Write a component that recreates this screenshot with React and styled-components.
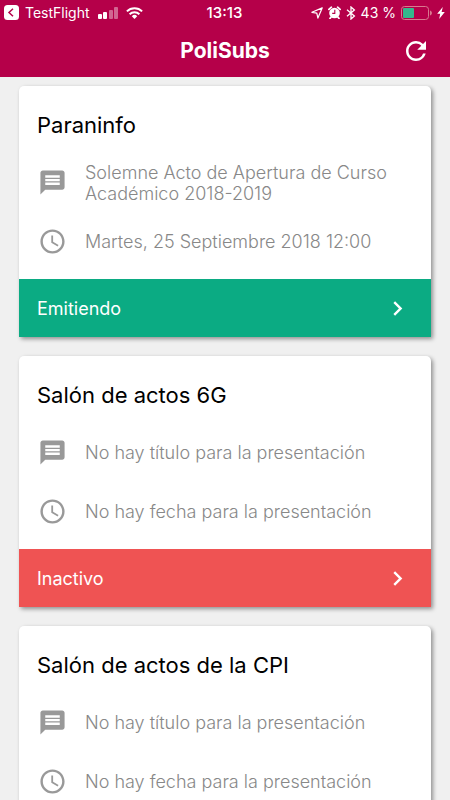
import React from 'react'
import styled, { createGlobalStyle } from 'styled-components'
import { MdAccessTime, MdChevronRight, MdMessage, MdRefresh } from 'react-icons/md'

const rooms = [
    {
        name: 'Paraninfo',
        title: 'Solemne Acto de Apertura de Curso Académico 2018-2019',
        date: 'Martes, 25 Septiembre 2018 12:00',
        status: 'Emitiendo',
        live: true,
    },
    {
        name: 'Salón de actos 6G',
        status: 'Inactivo',
    },
    {
        name: 'Salón de actos de la CPI',
    },
]

function StatusBar() {
    return (
        <Status>
            <StatusLeft>
                <BackLink href="#testflight">
                    <svg width="15" height="15" viewBox="0 0 15 15">
                        <rect width="15" height="15" rx="3.5" fill="#fff" />
                        <path d="M9 3.7 5 7.5l4 3.8" fill="none" stroke="#b50049" strokeWidth="1.5" />
                    </svg>
                    TestFlight
                </BackLink>
                <svg width="20" height="12" viewBox="0 0 20 12" fill="#fff">
                    <rect y="7" width="4" height="5" rx="1" />
                    <rect x="5" y="5" width="4" height="7" rx="1" />
                    <rect x="11" y="3" width="4" height="9" rx="1" opacity=".4" />
                    <rect x="16" y="0" width="4" height="12" rx="1" opacity=".4" />
                </svg>
                <svg width="17" height="12" viewBox="0 0 17 12" fill="none" stroke="#fff" strokeWidth="2">
                    <path d="M.9 4.4a10.8 10.8 0 0 1 15.2 0" />
                    <path d="M3.6 7.2a7 7 0 0 1 9.8 0" />
                    <path d="M8.5 12 5.8 9.2a3.8 3.8 0 0 1 5.4 0z" fill="#fff" stroke="none" />
                </svg>
            </StatusLeft>
            <Clock>13:13</Clock>
            <StatusRight>
                <svg width="12" height="12" viewBox="0 0 12 12" fill="none" stroke="#fff" strokeWidth="1.2">
                    <path d="M11.2.9.9 5.3l4.9.9 1.1 4.9z" strokeLinejoin="round" />
                </svg>
                <svg width="13" height="13" viewBox="0 0 13 13">
                    <circle cx="6.5" cy="7" r="5.3" fill="#fff" />
                    <path d="m.9 3.4 2.5-2.2M12.1 3.4 9.6 1.2M3.2 11 2 12.4M9.8 11l1.2 1.4" fill="none" stroke="#fff" strokeWidth="1.7" strokeLinecap="round" />
                    <path d="M6.8 3.8v3.6H4.2" fill="none" stroke="#b50049" strokeWidth="1.1" />
                </svg>
                <svg width="10" height="14" viewBox="0 0 10 14" fill="none" stroke="#fff" strokeWidth="1.3">
                    <path d="m1 3.8 7.4 6.2L5 13V1l3.4 3L1 10.2" />
                </svg>
                <span>43 %</span>
                <svg width="31" height="14" viewBox="0 0 31 14">
                    <rect x=".5" y=".5" width="27" height="13" rx="3" fill="none" stroke="#d9798f" />
                    <rect x="2" y="2" width="11" height="10" rx="1" fill="#35b88c" />
                    <path d="M29 4.5c2.6.8 2.6 4.2 0 5z" fill="#d9798f" />
                </svg>
                <svg width="8" height="12" viewBox="0 0 8 12" fill="#fff">
                    <path d="M5.8 0 .2 6.8h3L2.2 12l5.6-7H4.6z" />
                </svg>
            </StatusRight>
        </Status>
    )
}

function RoomCard({ room }) {
    return (
        <Card>
            <CardBody>
                <RoomName>{room.name}</RoomName>
                <Info>
                    <MdMessage size={29} />
                    <InfoText>{room.title || 'No hay título para la presentación'}</InfoText>
                </Info>
                <Info>
                    <MdAccessTime size={29} />
                    <InfoText>{room.date || 'No hay fecha para la presentación'}</InfoText>
                </Info>
            </CardBody>
            {room.status &&
            (<StatusButton $live={room.live}>
                <span>{room.status}</span>
                <MdChevronRight size={29} />
            </StatusButton>)
            }
        </Card>
    )
}

function App() {
    return (
        <Screen>
            <GlobalStyle />
            <Header>
                <StatusBar />
                <NavBar>
                    <Title>PoliSubs</Title>
                    <RefreshButton aria-label="Actualizar">
                        <MdRefresh size={30} />
                    </RefreshButton>
                </NavBar>
            </Header>
            <RoomList>
                {rooms.map((room) => (
                    <RoomCard key={room.name} room={room} />
                ))}
            </RoomList>
        </Screen>
    )
}

export default App

const GlobalStyle = createGlobalStyle`
* {
    box-sizing: border-box;
}
body {
    margin: 0;
    background: #f0f0f0;
    font-family: Inter, Roboto, sans-serif;
}
svg {
    display: block;
    flex-shrink: 0;
}
button {
    border: none;
    padding: 0;
    font-family: inherit;
    cursor: pointer;
}
`
const Screen = styled.div`
display: flex;
flex-direction: column;
height: 100vh;
overflow: hidden;
`
const Header = styled.header`
flex-shrink: 0;
background: #b50049;
color: white;
`
const Status = styled.div`
display: grid;
grid-template-columns: 1fr auto 1fr;
align-items: center;
height: 25px;
padding: 0 5px 0 4px;
font-size: 14px;
`
const StatusLeft = styled.div`
display: flex;
align-items: center;
gap: 8px;
`
const BackLink = styled.a`
display: flex;
align-items: center;
gap: 6px;
color: inherit;
text-decoration: none;
`
const Clock = styled.span`
font-size: 15px;
font-weight: 500;
`
const StatusRight = styled.div`
display: flex;
align-items: center;
justify-content: flex-end;
gap: 5px;
white-space: nowrap;
`
const NavBar = styled.div`
display: grid;
grid-template-columns: 1fr auto 1fr;
align-items: center;
height: 52px;
padding: 0 19px;
`
const Title = styled.h1`
grid-column: 2;
margin: 0;
font-size: 21px;
line-height: 28px;
font-weight: 700;
`
const RefreshButton = styled.button`
justify-self: end;
background: none;
color: white;
`
const RoomList = styled.main`
flex: 1;
display: flex;
flex-direction: column;
gap: 19px;
padding: 9px 19px 19px;
overflow-y: auto;
scrollbar-width: none;
`
const Card = styled.article`
flex-shrink: 0;
background: white;
border-radius: 5px 5px 0 0;
box-shadow: 2px 2px 4px rgba(0, 0, 0, 0.4);
`
const CardBody = styled.div`
padding: 25px 18px 8px;
`
const RoomName = styled.h2`
margin: 0 0 14px;
font-size: 22px;
line-height: 28px;
font-weight: 400;
color: black;
`
const Info = styled.div`
display: flex;
align-items: center;
gap: 18px;
height: 59px;
padding-left: 1px;
color: #999;
`
const InfoText = styled.p`
margin: 0;
font-size: 18px;
line-height: 21px;
font-weight: 300;
color: #888;
`
const StatusButton = styled.button`
display: flex;
align-items: center;
justify-content: space-between;
width: 100%;
height: 58px;
padding: 0 19px 0 18px;
background: ${(props) => (props.$live ? '#0bab83' : '#ef5353')};
color: white;
font-size: 18px;
`
